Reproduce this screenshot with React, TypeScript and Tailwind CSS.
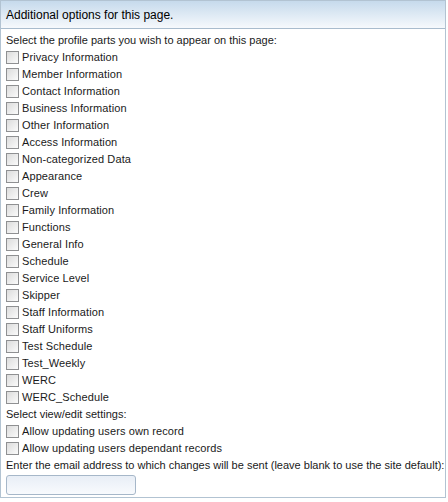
import React from "react";

const items = [
  "Privacy Information",
  "Member Information",
  "Contact Information",
  "Business Information",
  "Other Information",
  "Access Information",
  "Non-categorized Data",
  "Appearance",
  "Crew",
  "Family Information",
  "Functions",
  "General Info",
  "Schedule",
  "Service Level",
  "Skipper",
  "Staff Information",
  "Staff Uniforms",
  "Test Schedule",
  "Test_Weekly",
  "WERC",
  "WERC_Schedule",
];

function Box() {
  return (
    <span className="inline-block w-[13px] h-[13px] border border-[#8f9092] bg-gradient-to-br from-[#dcdcdc] to-[#fbfbfb] shrink-0" />
  );
}

function Row({ label }: { label: string }) {
  return (
    <div className="flex items-center h-[17px] gap-[3px]">
      <Box />
      <span className="tracking-[0.1px]">{label}</span>
    </div>
  );
}

export default function App() {
  return (
    <div className="w-[448px] h-[502px] bg-white" style={{ fontFamily: '"Liberation Sans", Arial, sans-serif' }}>
      <div className="w-[446px] h-[498px] border border-[#b2c3d2] text-[11px] text-[#1a1a1a]">
        <div className="h-[28px] border-b border-[#a9bccd] bg-gradient-to-b from-[#c6daec] to-[#f6f9fc] flex items-center pl-[5px] text-[12px] text-black">
          Additional options for this page.
        </div>
        <div className="pl-[5px] pt-[3px] whitespace-nowrap">
          <div className="h-[17px] flex items-center">Select the profile parts you wish to appear on this page:</div>
          {items.map((i) => (
            <Row key={i} label={i} />
          ))}
          <div className="h-[17px] flex items-center">Select view/edit settings:</div>
          <Row label="Allow updating users own record" />
          <Row label="Allow updating users dependant records" />
          <div className="h-[17px] flex items-center">Enter the email address to which changes will be sent (leave blank to use the site default):</div>
          <div className="pt-[1px]">
            <div className="w-[130px] h-[20px] rounded-[3px] border border-[#a6b7c9] bg-gradient-to-b from-[#e8eef6] to-[#f8fafd]" />
          </div>
        </div>
      </div>
    </div>
  );
}
